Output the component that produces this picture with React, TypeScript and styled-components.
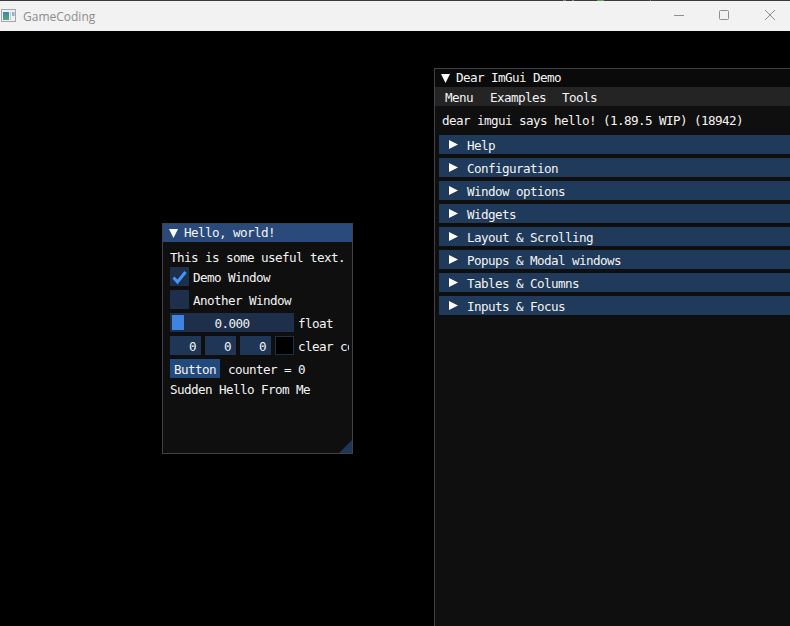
import React from "react";
import styled, { createGlobalStyle } from "styled-components";

const Global = createGlobalStyle`
  html, body { margin: 0; padding: 0; background: #000; }
  #root { width: 790px; height: 626px; overflow: hidden; }
`;

const Page = styled.div`
  width: 790px;
  height: 626px;
  display: flex;
  flex-direction: column;
  overflow: hidden;
  background: #000;
`;

const TopStrip = styled.div`
  height: 1px;
  flex: none;
  background: linear-gradient(
    90deg,
    #3a3a3a 0 563px,
    #8a7a6a 563px 566px,
    #3a3a3a 566px 572px,
    #6a8a9a 572px 574px,
    #3a3a3a 574px 597px,
    #58a060 597px 604px,
    #3a3a3a 604px 650px,
    #50a090 650px 651px,
    #3a3a3a 651px
  );
`;

const TitleBar = styled.header`
  height: 30px;
  flex: none;
  display: flex;
  align-items: center;
  background: #f2f2f2;
  padding-left: 1px;
`;

const AppName = styled.span`
  font: 12px "Open Sans", sans-serif;
  color: #8c8c8c;
  margin-left: 7px;
  flex: 1;
`;

const Ctrl = styled.svg`
  width: 46px;
  height: 30px;
  flex: none;
  fill: none;
  stroke: #8f8f8f;
  stroke-width: 1;
`;

const Desktop = styled.main`
  flex: 1;
  position: relative;
  overflow: hidden;
`;

const Win = styled.section<{ $x: number; $y: number; $w: number; $h: number }>`
  position: absolute;
  left: ${(p) => p.$x}px;
  top: ${(p) => p.$y}px;
  width: ${(p) => p.$w}px;
  height: ${(p) => p.$h}px;
  box-sizing: border-box;
  border: 1px solid #41414a;
  background: #0f0f0f;
  color: #f4f4f4;
  font-family: "DejaVu Sans Mono", monospace;
  font-size: 12.6px;
  letter-spacing: -0.585px;
  line-height: 13px;
  white-space: pre;
  overflow: hidden;
  display: flex;
  flex-direction: column;
`;

const Txt = styled.span`
  display: block;
  height: 13px;
  line-height: 15px;
  flex: none;
`;

const TitleTxt = styled(Txt)`
  line-height: 11px;
`;

const WinTitle = styled.div<{ $active?: boolean }>`
  height: 18px;
  flex: none;
  display: flex;
  align-items: center;
  gap: 6px;
  padding-left: 6px;
  background: ${(p) => (p.$active ? "#294a7a" : "#0a0a0a")};
`;

const Arrow = styled.svg`
  width: 9px;
  height: 9px;
  flex: none;
  fill: #fff;
`;

const HelloBody = styled.div`
  display: flex;
  flex-direction: column;
  gap: 4px;
  padding: 8px 0 4px 7px;
  width: 179px;
  overflow: hidden;
`;

const Row = styled.div`
  display: flex;
  align-items: center;
  height: 19px;
  gap: 4px;
`;

const Frame = styled.div<{ $w: number }>`
  width: ${(p) => p.$w}px;
  height: 19px;
  flex: none;
  background: #1d2f4a;
  display: flex;
  align-items: center;
  justify-content: center;
  position: relative;
`;

const Grab = styled.div`
  position: absolute;
  left: 2px;
  top: 2px;
  width: 12px;
  height: 15px;
  background: #3d85e0;
`;

const Drag = styled(Frame)`
  justify-content: flex-end;
  padding-right: 5px;
  box-sizing: border-box;
  background: #1f3656;
`;

const Swatch = styled.div`
  width: 19px;
  height: 19px;
  flex: none;
  box-sizing: border-box;
  background: #000;
  border: 1px solid #1d2f4a;
`;

const Check = styled.svg`
  width: 19px;
  height: 19px;
  fill: none;
  stroke: #4296fa;
  stroke-width: 3;
`;

const PushButton = styled.div`
  height: 19px;
  width: 50px;
  flex: none;
  background: #234a7c;
  display: flex;
  align-items: center;
  justify-content: center;
  margin-right: 4px;
`;

const Grip = styled.svg`
  position: absolute;
  right: 0;
  bottom: 0;
  width: 13px;
  height: 13px;
  fill: #1f3656;
`;

const MenuBar = styled.nav`
  height: 19px;
  flex: none;
  display: flex;
  align-items: center;
  padding-left: 10px;
  background: #242424;
`;

const MenuItem = styled(Txt)<{ $gap: number }>`
  margin-right: ${(p) => p.$gap}px;
`;

const Hello = styled.div`
  height: 13px;
  margin: 8px 0 8px 7px;
  flex: none;
`;

const Headers = styled.div`
  display: flex;
  flex-direction: column;
  gap: 4px;
  padding-left: 4px;
`;

const Header = styled.div`
  height: 19px;
  display: flex;
  align-items: center;
  gap: 9px;
  padding-left: 10px;
  background: #1f3a5a;
`;

const RightArrow = () => (
  <Arrow viewBox="0 0 9 9"><polygon points="0,0 9,4.5 0,9" /></Arrow>
);
const DownArrow = () => (
  <Arrow viewBox="0 0 9 9"><polygon points="0,0 9,0 4.5,9" /></Arrow>
);

const sections = [
  "Help",
  "Configuration",
  "Window options",
  "Widgets",
  "Layout & Scrolling",
  "Popups & Modal windows",
  "Tables & Columns",
  "Inputs & Focus",
];

export default function App() {
  return (
    <Page>
      <Global />
      <TopStrip />
      <TitleBar>
        <svg width="15" height="14" viewBox="0 0 15 14">
          <defs>
            <linearGradient id="pane" x1="0" y1="0" x2="0" y2="1">
              <stop offset="0" stopColor="#3f86b0" />
              <stop offset="1" stopColor="#5aa57a" />
            </linearGradient>
          </defs>
          <rect x="0.5" y="0.5" width="14" height="12" fill="#eef1f2" stroke="#a3a7aa" />
          <rect x="2" y="3" width="6" height="8" fill="url(#pane)" />
          <rect x="9" y="3" width="1" height="8" fill="#c4ccd0" />
          <rect x="11" y="3" width="2.5" height="4" fill="#8fb4c8" />
        </svg>
        <AppName>GameCoding</AppName>
        <Ctrl viewBox="0 0 46 30"><path d="M22 14.5h10" /></Ctrl>
        <Ctrl viewBox="0 0 46 30"><rect x="21.5" y="9.5" width="9" height="9" rx="1" /></Ctrl>
        <Ctrl viewBox="0 0 46 30"><path d="M21 9l10 10M31 9l-10 10" /></Ctrl>
      </TitleBar>
      <Desktop>
        <Win $x={162} $y={192} $w={191} $h={231}>
          <WinTitle $active><DownArrow /><TitleTxt>Hello, world!</TitleTxt></WinTitle>
          <HelloBody>
            <Txt>This is some useful text.</Txt>
            <Row>
              <Frame $w={19}>
                <Check viewBox="0 0 19 19"><path d="M3.5 10.5l4 4.5 8-10" /></Check>
              </Frame>
              <Txt>Demo Window</Txt>
            </Row>
            <Row>
              <Frame $w={19} />
              <Txt>Another Window</Txt>
            </Row>
            <Row>
              <Frame $w={124}><Grab /><Txt>0.000</Txt></Frame>
              <Txt>float</Txt>
            </Row>
            <Row>
              <Drag $w={31}><Txt>0</Txt></Drag>
              <Drag $w={31}><Txt>0</Txt></Drag>
              <Drag $w={31}><Txt>0</Txt></Drag>
              <Swatch />
              <Txt>clear color</Txt>
            </Row>
            <Row>
              <PushButton><Txt>Button</Txt></PushButton>
              <Txt>counter = 0</Txt>
            </Row>
            <Txt>Sudden Hello From Me</Txt>
          </HelloBody>
          <Grip viewBox="0 0 13 13"><polygon points="13,0 13,13 0,13" /></Grip>
        </Win>
        <Win $x={434} $y={37} $w={400} $h={600}>
          <WinTitle><DownArrow /><TitleTxt>Dear ImGui Demo</TitleTxt></WinTitle>
          <MenuBar>
            <MenuItem $gap={17}>Menu</MenuItem>
            <MenuItem $gap={16}>Examples</MenuItem>
            <MenuItem $gap={0}>Tools</MenuItem>
          </MenuBar>
          <Hello>dear imgui says hello! (1.89.5 WIP) (18942)</Hello>
          <Headers>
            {sections.map((s) => (
              <Header key={s}><RightArrow /><Txt>{s}</Txt></Header>
            ))}
          </Headers>
        </Win>
      </Desktop>
    </Page>
  );
}
